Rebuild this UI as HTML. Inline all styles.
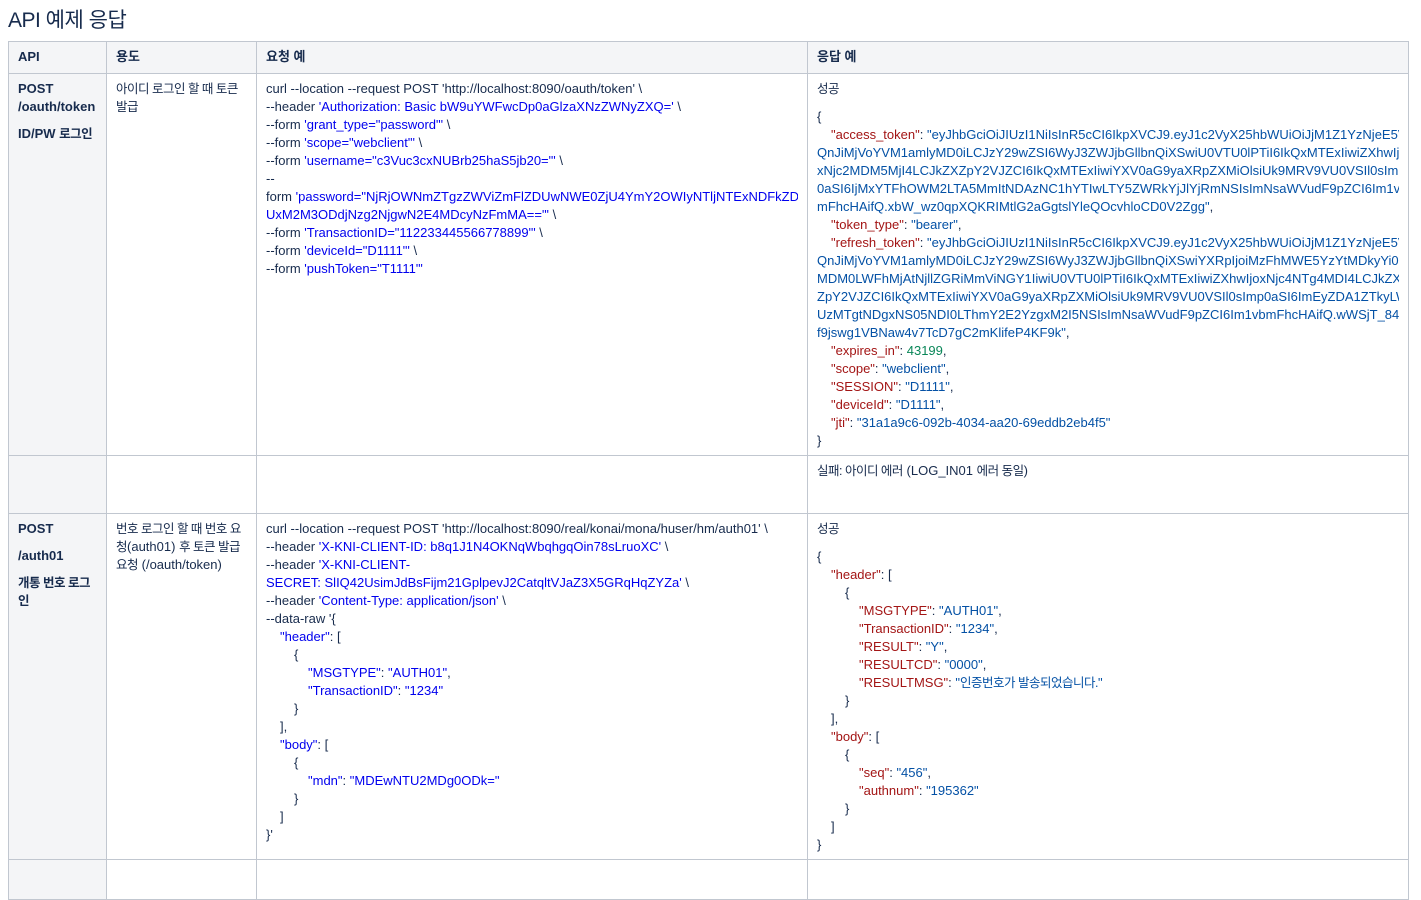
<!DOCTYPE html>
<html><head><meta charset="utf-8">
<style>
body{margin:0;background:#fff;font-family:"Liberation Sans","Noto Sans CJK KR",sans-serif;color:#172b4d;font-size:13px;width:1421px;height:869px;overflow:hidden;}
h1{position:absolute;left:8px;top:4px;margin:0;font-size:21px;font-weight:normal;color:#172b4d;letter-spacing:-0.5px}
table{position:absolute;left:8px;top:41px;border-collapse:collapse;table-layout:fixed;width:1400px}
td,th{border:1px solid #c1c7d0;vertical-align:top;padding:6px 9px 5px 9px;line-height:18px;text-align:left}
th{background:#f4f5f7;font-weight:bold;height:17px;padding-top:6px;padding-bottom:7px}
td.f{background:#f4f5f7;font-weight:bold}
.l{white-space:nowrap;overflow:hidden}
.s{color:#0000ee}
.k{color:#a31515}
.v{color:#0451a5}
.n{color:#098658}
p{margin:0}
.i1{padding-left:14px}.i2{padding-left:28px}.i3{padding-left:42px}
.kr{white-space:nowrap;font-size:12.5px;letter-spacing:-0.5px}
</style></head><body>
<h1>API 예제 응답</h1>
<table>
<colgroup><col style="width:98px"><col style="width:150px"><col style="width:551px"><col style="width:601px"></colgroup>
<tr><th>API</th><th>용도</th><th>요청 예</th><th>응답 예</th></tr>
<tr style="height:379px">
<td class="f"><p>POST<br>/oauth/token</p><p style="margin-top:9px">ID/PW <span class="kr">로그인</span></p></td>
<td><span class="kr">아이디 로그인 할 때 토큰</span><br><span class="kr">발급</span></td>
<td>
<div class="l">curl --location --request POST 'http://localhost:8090/oauth/token' \</div>
<div class="l">--header <span class="s">'Authorization: Basic bW9uYWFwcDp0aGlzaXNzZWNyZXQ='</span> \</div>
<div class="l">--form <span class="s">'grant_type="password"'</span> \</div>
<div class="l">--form <span class="s">'scope="webclient"'</span> \</div>
<div class="l">--form <span class="s">'username="c3Vuc3cxNUBrb25haS5jb20="'</span> \</div>
<div class="l">--</div>
<div class="l">form <span class="s">'password="NjRjOWNmZTgzZWViZmFlZDUwNWE0ZjU4YmY2OWIyNTljNTExNDFkZD</span></div>
<div class="l"><span class="s">UxM2M3ODdjNzg2NjgwN2E4MDcyNzFmMA=="'</span> \</div>
<div class="l">--form <span class="s">'TransactionID="112233445566778899"'</span> \</div>
<div class="l">--form <span class="s">'deviceId="D1111"'</span> \</div>
<div class="l">--form <span class="s">'pushToken="T1111"'</span></div>
</td>
<td>
<div><span class="kr">성공</span></div>
<div style="margin-top:10px">{</div>
<div class="l i1"><span class="k">"access_token"</span>: <span class="v">"eyJhbGciOiJIUzI1NiIsInR5cCI6IkpXVCJ9.eyJ1c2VyX25hbWUiOiJjM1Z1YzNjeE5V</span></div>
<div class="l v">QnJiMjVoYVM1amlyMD0iLCJzY29wZSI6WyJ3ZWJjbGllbnQiXSwiU0VTU0lPTiI6IkQxMTExIiwiZXhwIjo</div>
<div class="l v">xNjc2MDM5MjI4LCJkZXZpY2VJZCI6IkQxMTExIiwiYXV0aG9yaXRpZXMiOlsiUk9MRV9VU0VSIl0sImp</div>
<div class="l v">0aSI6IjMxYTFhOWM2LTA5MmItNDAzNC1hYTIwLTY5ZWRkYjJlYjRmNSIsImNsaWVudF9pZCI6Im1vb</div>
<div class="l"><span class="v">mFhcHAifQ.xbW_wz0qpXQKRIMtlG2aGgtslYleQOcvhloCD0V2Zgg"</span>,</div>
<div class="l i1"><span class="k">"token_type"</span>: <span class="v">"bearer"</span>,</div>
<div class="l i1"><span class="k">"refresh_token"</span>: <span class="v">"eyJhbGciOiJIUzI1NiIsInR5cCI6IkpXVCJ9.eyJ1c2VyX25hbWUiOiJjM1Z1YzNjeE5V</span></div>
<div class="l v">QnJiMjVoYVM1amlyMD0iLCJzY29wZSI6WyJ3ZWJjbGllbnQiXSwiYXRpIjoiMzFhMWE5YzYtMDkyYi00</div>
<div class="l v">MDM0LWFhMjAtNjllZGRiMmViNGY1IiwiU0VTU0lPTiI6IkQxMTExIiwiZXhwIjoxNjc4NTg4MDI4LCJkZX</div>
<div class="l v">ZpY2VJZCI6IkQxMTExIiwiYXV0aG9yaXRpZXMiOlsiUk9MRV9VU0VSIl0sImp0aSI6ImEyZDA1ZTkyLW</div>
<div class="l v">UzMTgtNDgxNS05NDI0LThmY2E2YzgxM2I5NSIsImNsaWVudF9pZCI6Im1vbmFhcHAifQ.wWSjT_84A</div>
<div class="l"><span class="v">f9jswg1VBNaw4v7TcD7gC2mKlifeP4KF9k"</span>,</div>
<div class="l i1"><span class="k">"expires_in"</span>: <span class="n">43199</span>,</div>
<div class="l i1"><span class="k">"scope"</span>: <span class="v">"webclient"</span>,</div>
<div class="l i1"><span class="k">"SESSION"</span>: <span class="v">"D1111"</span>,</div>
<div class="l i1"><span class="k">"deviceId"</span>: <span class="v">"D1111"</span>,</div>
<div class="l i1"><span class="k">"jti"</span>: <span class="v">"31a1a9c6-092b-4034-aa20-69eddb2eb4f5"</span></div>
<div>}</div>
</td></tr>
<tr style="height:58px"><td class="f"></td><td></td><td></td><td><span class="kr">실패: 아이디 에러</span> (LOG_IN01 <span class="kr">에러 동일</span>)</td></tr>
<tr style="height:345px">
<td class="f"><p>POST</p><p style="margin-top:9px">/auth01</p><p style="margin-top:9px"><span class="kr">개통 번호 로그</span><br><span class="kr">인</span></p></td>
<td><span class="kr">번호 로그인 할 때 번호 요</span><br><span class="kr">청</span>(auth01) <span class="kr">후 토큰 발급</span><br><span class="kr">요청</span> (/oauth/token)</td>
<td>
<div class="l">curl --location --request POST 'http://localhost:8090/real/konai/mona/huser/hm/auth01' \</div>
<div class="l">--header <span class="s">'X-KNI-CLIENT-ID: b8q1J1N4OKNqWbqhgqOin78sLruoXC'</span> \</div>
<div class="l">--header <span class="s">'X-KNI-CLIENT-</span></div>
<div class="l"><span class="s">SECRET: SlIQ42UsimJdBsFijm21GplpevJ2CatqltVJaZ3X5GRqHqZYZa'</span> \</div>
<div class="l">--header <span class="s">'Content-Type: application/json'</span> \</div>
<div class="l">--data-raw '{</div>
<div class="l i1"><span class="s">"header"</span>: [</div>
<div class="l i2">{</div>
<div class="l i3"><span class="s">"MSGTYPE"</span>: <span class="s">"AUTH01"</span>,</div>
<div class="l i3"><span class="s">"TransactionID"</span>: <span class="s">"1234"</span></div>
<div class="l i2">}</div>
<div class="l i1">],</div>
<div class="l i1"><span class="s">"body"</span>: [</div>
<div class="l i2">{</div>
<div class="l i3"><span class="s">"mdn"</span>: <span class="s">"MDEwNTU2MDg0ODk="</span></div>
<div class="l i2">}</div>
<div class="l i1">]</div>
<div class="l">}'</div>
</td>
<td>
<div><span class="kr">성공</span></div>
<div style="margin-top:10px">{</div>
<div class="l i1"><span class="k">"header"</span>: [</div>
<div class="l i2">{</div>
<div class="l i3"><span class="k">"MSGTYPE"</span>: <span class="v">"AUTH01"</span>,</div>
<div class="l i3"><span class="k">"TransactionID"</span>: <span class="v">"1234"</span>,</div>
<div class="l i3"><span class="k">"RESULT"</span>: <span class="v">"Y"</span>,</div>
<div class="l i3"><span class="k">"RESULTCD"</span>: <span class="v">"0000"</span>,</div>
<div class="l i3"><span class="k">"RESULTMSG"</span>: <span class="v">"<span class="kr">인증번호가 발송되었습니다.</span>"</span></div>
<div class="l i2">}</div>
<div class="l i1">],</div>
<div class="l i1"><span class="k">"body"</span>: [</div>
<div class="l i2">{</div>
<div class="l i3"><span class="k">"seq"</span>: <span class="v">"456"</span>,</div>
<div class="l i3"><span class="k">"authnum"</span>: <span class="v">"195362"</span></div>
<div class="l i2">}</div>
<div class="l i1">]</div>
<div>}</div>
</td></tr>
<tr style="height:40px"><td class="f"></td><td></td><td></td><td></td></tr>
</table>
</body></html>
